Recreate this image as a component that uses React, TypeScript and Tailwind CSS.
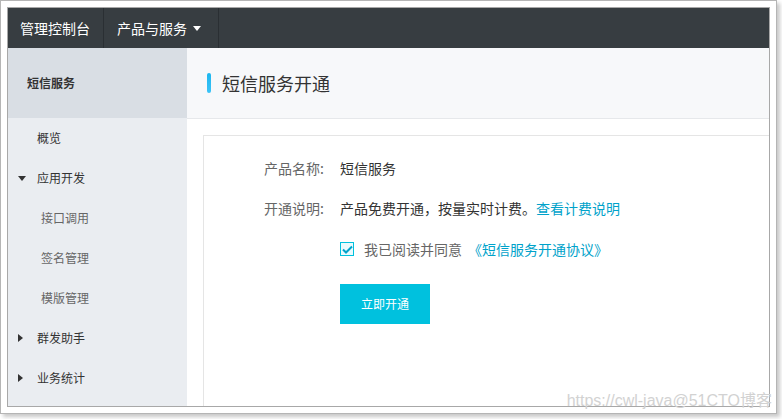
import React from "react"

const font = { fontFamily: '"Noto Sans CJK SC", "Noto Sans", sans-serif' }

function DownCaret({ className = "" }: { className?: string }) {
  return (
    <svg width="8" height="5" viewBox="0 0 8 5" className={className}>
      <polygon points="0,0 8,0 4,5" fill="currentColor" />
    </svg>
  )
}

function RightCaret() {
  return (
    <svg width="5" height="8" viewBox="0 0 5 8">
      <polygon points="0,0 5,4 0,8" fill="#333" />
    </svg>
  )
}

const menu: { label: string; kind: "top" | "open" | "closed" | "sub" }[] = [
  { label: "概览", kind: "top" },
  { label: "应用开发", kind: "open" },
  { label: "接口调用", kind: "sub" },
  { label: "签名管理", kind: "sub" },
  { label: "模版管理", kind: "sub" },
  { label: "群发助手", kind: "closed" },
  { label: "业务统计", kind: "closed" },
]

export default function App() {
  return (
    <div className="relative w-[782px] h-[419px] bg-white overflow-hidden" style={font}>
      <div className="w-[777px] h-[414px] border border-[#b5b5b5] bg-white p-[6px] shadow-[3px_3px_4px_rgba(0,0,0,0.22)]">
        <div className="flex h-full flex-col overflow-hidden border border-[#a8a8a8]">
          {/* top nav */}
          <div className="flex h-10 shrink-0 bg-[#373d41] text-[14px] text-white">
            <div className="flex items-center border-r border-[#2a2f33] pl-3 pr-[13px]">管理控制台</div>
            <div className="flex items-center border-r border-[#2a2f33] pl-[13px] pr-[17px]">
              产品与服务
              <DownCaret className="ml-[6px] text-white" />
            </div>
            <div className="flex-1" />
          </div>

          <div className="flex flex-1 min-h-0">
            {/* sidebar */}
            <div className="w-[179px] shrink-0 bg-[#eaedf1]">
              <div className="flex h-[70px] items-center bg-[#d9dee4] pl-[19px] text-[12px] font-semibold text-[#333]">
                短信服务
              </div>
              {menu.map((m) => (
                <div key={m.label} className="flex h-10 items-center text-[12px]">
                  {m.kind === "sub" ? (
                    <span className="pl-[33px] text-[#666]">{m.label}</span>
                  ) : (
                    <>
                      <span className="flex w-[29px] items-center pl-[10px]">
                        {m.kind === "open" && <DownCaret className="text-[#333]" />}
                        {m.kind === "closed" && <RightCaret />}
                      </span>
                      <span className="text-[#333]">{m.label}</span>
                    </>
                  )}
                </div>
              ))}
            </div>

            {/* main */}
            <div className="flex flex-1 flex-col min-w-0 overflow-hidden">
              <div className="flex h-[71px] shrink-0 items-center border-b border-[#e6e8eb] bg-[#f7f8fa] pl-5">
                <span className="h-5 w-1 rounded-full bg-gradient-to-b from-[#1ab6ef] to-[#3bc3f7]" />
                <span className="ml-[11px] text-[18px] text-[#333]">短信服务开通</span>
              </div>
              <div className="flex-1 bg-white pl-4 pt-4">
                <div className="-mr-6 h-[300px] border border-[#e5e5e5] pt-3 text-[14px]">
                  <div className="flex h-10 items-center">
                    <span className="w-[120px] text-right text-[#666]">产品名称:</span>
                    <span className="ml-4 text-[#333]">短信服务</span>
                  </div>
                  <div className="flex h-10 items-center">
                    <span className="w-[120px] text-right text-[#666]">开通说明:</span>
                    <span className="ml-4 text-[#333]">产品免费开通，按量实时计费。</span>
                    <span className="text-[#00a2ca]">查看计费说明</span>
                  </div>
                  <div className="flex h-[42px] items-center pl-[136px]">
                    <span className="flex h-[14px] w-[14px] items-center justify-center border border-[#00c1de] bg-[#eafafd]">
                      <svg width="11" height="9" viewBox="0 0 11 9">
                        <polyline points="1,4.5 4,7.5 10,1.5" fill="none" stroke="#00a2ca" strokeWidth="2" />
                      </svg>
                    </span>
                    <span className="ml-[10px] text-[#666]">我已阅读并同意</span>
                    <span className="ml-[6px] text-[#00a2ca]">《短信服务开通协议》</span>
                  </div>
                  <div className="mt-[14px] pl-[136px]">
                    <button className="h-10 w-[90px] bg-[#00c1de] text-[12px] text-white">立即开通</button>
                  </div>
                </div>
              </div>
            </div>
          </div>
        </div>
      </div>

      <div
        className="absolute bottom-[10px] right-[10px] text-[16px] leading-none text-[#d2d2d2]"
        style={{ fontFamily: '"Liberation Sans", "Noto Sans CJK SC", sans-serif' }}
      >
        https://cwl-java@51CTO博客
      </div>
    </div>
  )
}
